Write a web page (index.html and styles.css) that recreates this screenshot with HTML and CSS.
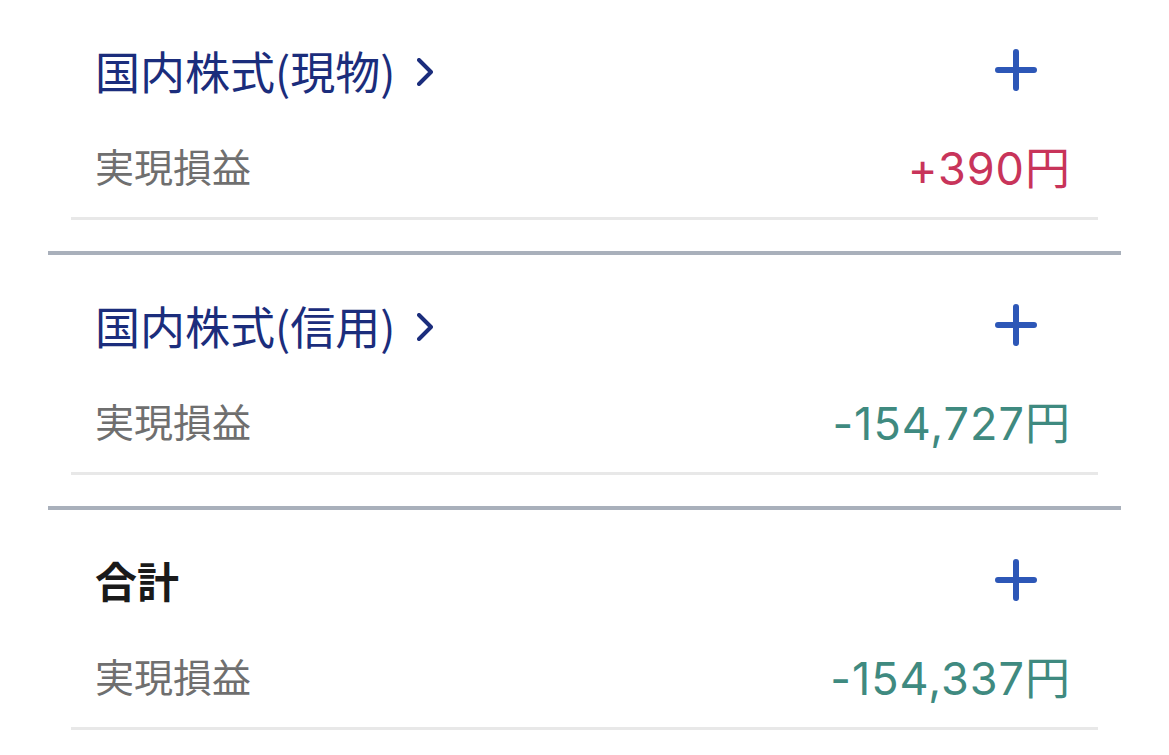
FILE: index.html
```html
<!DOCTYPE html>
<html lang="ja">
<head>
    <meta charset="UTF-8">
    <meta name="viewport" content="width=device-width, initial-scale=1.0">
    <title>実現損益</title>
    <link rel="stylesheet" href="styles.css">
</head>
<body>
    <div id="profit-list">
        <div class="section">
            <div class="head">
                <a class="title link" href="#">国内株式(現物)
                    <svg class="chevron" width="16" height="28" viewBox="0 0 16 28"><path d="M2 2 L14 14 L2 26" /></svg>
                </a>
                <button class="add">
                    <svg width="42" height="42" viewBox="0 0 42 42"><path d="M21 3 V39 M3 21 H39" /></svg>
                </button>
            </div>
            <div class="row">
                <span class="label">実現損益</span>
                <span class="value plus">+390円</span>
            </div>
        </div>

        <div class="section">
            <div class="head">
                <a class="title link" href="#">国内株式(信用)
                    <svg class="chevron" width="16" height="28" viewBox="0 0 16 28"><path d="M2 2 L14 14 L2 26" /></svg>
                </a>
                <button class="add">
                    <svg width="42" height="42" viewBox="0 0 42 42"><path d="M21 3 V39 M3 21 H39" /></svg>
                </button>
            </div>
            <div class="row">
                <span class="label">実現損益</span>
                <span class="value minus">-154,727円</span>
            </div>
        </div>

        <div class="section last">
            <div class="head">
                <span class="title total">合計</span>
                <button class="add">
                    <svg width="42" height="42" viewBox="0 0 42 42"><path d="M21 3 V39 M3 21 H39" /></svg>
                </button>
            </div>
            <div class="row">
                <span class="label">実現損益</span>
                <span class="value minus">-154,337円</span>
            </div>
        </div>
    </div>
</body>
</html>
```

FILE: styles.css
```css
body {
    margin: 0;
    background-color: #ffffff;
    font-family: "Noto Sans CJK JP", sans-serif;
}

#profit-list {
    padding: 0 48px;
}

.section {
    padding: 20px 0 31px;
    border-bottom: 4px solid #a9b0bb;
}

.section.last {
    border-bottom: none;
}

.section .head,
.section .row {
    margin: 0 23px;
    padding: 0 27px 0 24px;
    display: flex;
    align-items: center;
    justify-content: space-between;
}

.head {
    height: 100px;
}

.row {
    height: 90px;
    padding-bottom: 7px !important;
    border-bottom: 3px solid #e8e8e8;
}

.title {
    font-size: 45px;
    line-height: 1;
    display: flex;
    align-items: center;
    text-decoration: none;
}

.link {
    color: #1b2d7c;
}

.total {
    color: #1a1a1a;
    font-weight: bold;
    font-size: 42px;
}

.chevron {
    margin-left: 22px;
    margin-top: 4px;
}

.chevron path {
    fill: none;
    stroke: #1b2d7c;
    stroke-width: 4;
    stroke-linecap: round;
    stroke-linejoin: round;
}

.add {
    background: none;
    border: none;
    padding: 0;
    margin-right: 34px;
    display: flex;
    cursor: pointer;
}

.add path {
    stroke: #2d57b7;
    stroke-width: 6;
    stroke-linecap: round;
}

.label {
    font-size: 39px;
    color: #6f6f6f;
}

.value {
    font-family: Inter, "Noto Sans CJK JP", sans-serif;
    font-size: 45px;
    letter-spacing: 1px;
}

.plus {
    color: #c8345a;
}

.minus {
    color: #3f8a80;
}
```
